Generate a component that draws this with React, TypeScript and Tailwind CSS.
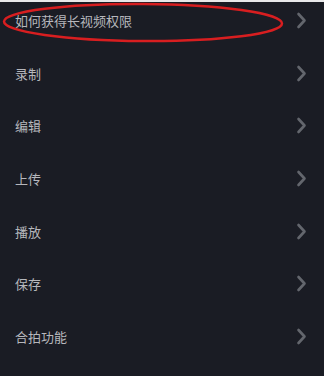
import React from "react";

const items = ["如何获得长视频权限", "录制", "编辑", "上传", "播放", "保存", "合拍功能"];

function Chevron() {
  return (
    <svg width="11" height="17" viewBox="0 0 11 17" fill="none" className="shrink-0">
      <path d="M2.5 2 L8.5 8.5 L2.5 15" stroke="#63666d" strokeWidth="2.6" strokeLinecap="round" strokeLinejoin="round" />
    </svg>
  );
}

export default function App() {
  return (
    <div
      className="relative w-[324px] h-[376px] overflow-hidden bg-[#1a1c24]"
      style={{ fontFamily: '"Noto Sans CJK SC", "Noto Sans", sans-serif' }}
    >
      <div className="h-[2px] bg-[#e9e9ea]" />
      <div className="flex flex-col">
        {items.map((t, i) => (
          <div
            key={t}
            className={
              i === 0
                ? "flex items-center justify-between h-[45px] pb-[8px] pl-[15px] pr-[17px]"
                : "flex items-center justify-between h-[52.6px] pl-[15px] pr-[17px]"
            }
          >
            <span className="text-[13px] leading-none text-[#b6b7bc]">{t}</span>
            <Chevron />
          </div>
        ))}
      </div>
      <svg className="absolute left-0 top-0" width="324" height="60" viewBox="0 0 324 60">
        <ellipse cx="143" cy="22.5" rx="139" ry="18.5" fill="none" stroke="#d81e20" strokeWidth="2.5" transform="rotate(0.4 143 22.5)" />
      </svg>
    </div>
  );
}
